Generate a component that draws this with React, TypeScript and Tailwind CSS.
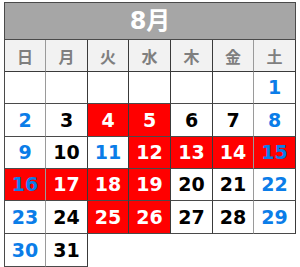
const DOW = ["日", "月", "火", "水", "木", "金", "土"];

// cell: [day, style]  b = blue text, r = red bg white text, rb = red bg blue text
type Cell = { d?: number; t?: "k" | "b" | "r" | "rb"; none?: boolean };

const weeks: Cell[][] = [
  [{}, {}, {}, {}, {}, {}, { d: 1, t: "b" }],
  [{ d: 2, t: "b" }, { d: 3 }, { d: 4, t: "r" }, { d: 5, t: "r" }, { d: 6 }, { d: 7 }, { d: 8, t: "b" }],
  [{ d: 9, t: "b" }, { d: 10 }, { d: 11, t: "b" }, { d: 12, t: "r" }, { d: 13, t: "r" }, { d: 14, t: "r" }, { d: 15, t: "rb" }],
  [{ d: 16, t: "rb" }, { d: 17, t: "r" }, { d: 18, t: "r" }, { d: 19, t: "r" }, { d: 20 }, { d: 21 }, { d: 22, t: "b" }],
  [{ d: 23, t: "b" }, { d: 24 }, { d: 25, t: "r" }, { d: 26, t: "r" }, { d: 27 }, { d: 28 }, { d: 29, t: "b" }],
  [{ d: 30, t: "b" }, { d: 31 }, { none: true }, { none: true }, { none: true }, { none: true }, { none: true }],
];

const heights = ["h-[32px]", "h-[33px]", "h-[32px]", "h-[32px]", "h-[33px]", "h-[33px]"];

function cellClass(c: Cell, col: number) {
  if (c.none) return "bg-white";
  const bg = c.t === "r" || c.t === "rb" ? "bg-[#ff0000]" : "bg-white";
  const fg =
    c.t === "r" ? "text-white" : c.t === "b" || c.t === "rb" ? "text-[#0b7de8]" : "text-black";
  const right = col === 0 || col === 5 ? "border-r-[#9a9a9a]" : "border-r-[#3a3a3a]";
  return `${bg} ${fg} border-r border-b border-b-[#4a4a4a] ${right}`;
}

export default function App() {
  return (
    <div className="w-[300px] h-[267px] bg-white pt-[2px] pl-[4px]" style={{ fontFamily: '"DejaVu Sans", "Noto Sans CJK JP", sans-serif' }}>
      <div className="w-[292px] border-l border-t border-[#4a4a4a]">
        <div className="h-[37px] bg-[#a6a6a6] border-r border-b border-[#4a4a4a] flex items-center justify-center text-white font-bold text-[24px] leading-none">
          8月
        </div>
        <div className="grid grid-cols-[41px_42px_41px_42px_42px_41px_42px] h-[32px]">
          {DOW.map((d, i) => (
            <div
              key={d}
              className={`bg-[#f2f2f2] border-r border-b border-b-[#3a3a3a] flex items-center justify-center text-[#7f7f7f] font-bold text-[16px] ${i === 0 || i === 5 ? "border-r-[#9a9a9a]" : "border-r-[#3a3a3a]"}`}
              style={{ fontFamily: '"Noto Sans CJK JP", sans-serif' }}
            >
              {d}
            </div>
          ))}
        </div>
        {weeks.map((w, r) => (
          <div key={r} className={`grid grid-cols-[41px_42px_41px_42px_42px_41px_42px] ${heights[r]}`}>
            {w.map((c, i) => (
              <div
                key={i}
                className={`${cellClass(c, i)} flex items-center justify-center font-bold text-[19px] leading-none`}
              >
                {c.d ?? ""}
              </div>
            ))}
          </div>
        ))}
      </div>
    </div>
  );
}
